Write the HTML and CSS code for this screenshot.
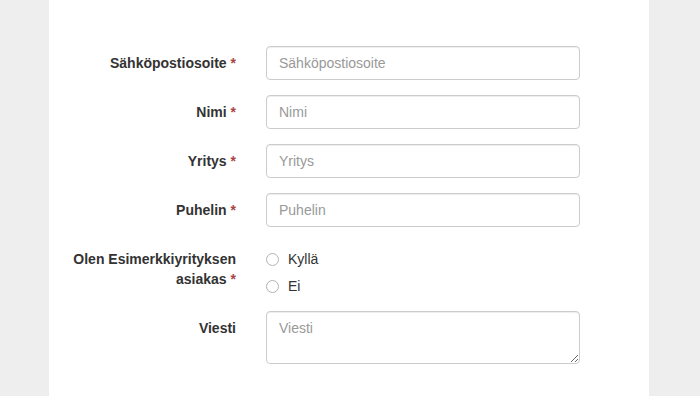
FILE: index.html
```html
<!DOCTYPE html>
<html lang="fi">
<head>
<meta charset="utf-8">
<link rel="stylesheet" href="styles.css">
</head>
<body>
<div class="page">
  <form class="panel">
    <div class="row">
      <label class="lbl" for="email">Sähköpostiosoite <span class="req">*</span></label>
      <input class="field" id="email" type="text" placeholder="Sähköpostiosoite">
    </div>
    <div class="row">
      <label class="lbl" for="name">Nimi <span class="req">*</span></label>
      <input class="field" id="name" type="text" placeholder="Nimi">
    </div>
    <div class="row">
      <label class="lbl" for="company">Yritys <span class="req">*</span></label>
      <input class="field" id="company" type="text" placeholder="Yritys">
    </div>
    <div class="row">
      <label class="lbl" for="phone">Puhelin <span class="req">*</span></label>
      <input class="field" id="phone" type="text" placeholder="Puhelin">
    </div>
    <div class="row">
      <div class="lbl">Olen Esimerkkiyrityksen asiakas <span class="req">*</span></div>
      <div class="radios">
        <label class="radio"><input type="radio" name="cust"><span>Kyllä</span></label>
        <label class="radio"><input type="radio" name="cust"><span>Ei</span></label>
      </div>
    </div>
    <div class="row">
      <label class="lbl" for="msg">Viesti</label>
      <textarea class="field area" id="msg" placeholder="Viesti"></textarea>
    </div>
  </form>
</div>
</body>
</html>
```
FILE: styles.css
```css
html, body {
  margin: 0;
  padding: 0;
  height: 100%;
  background: #eeeeee;
  font-family: "Liberation Sans", Arial, Helvetica, sans-serif;
  font-size: 14px;
  line-height: 20px;
  color: #333333;
}
.page {
  width: 600px;
  margin-left: 49px;
  min-height: 100%;
  background: #ffffff;
}
.panel {
  padding: 46px 0 0 15px;
  display: flex;
  flex-direction: column;
  gap: 15px;
}
.row {
  display: grid;
  grid-template-columns: 172px 314px;
  column-gap: 30px;
  align-items: start;
}
.lbl {
  font-weight: bold;
  text-align: right;
  padding-top: 7px;
}
.req {
  color: #a94442;
}
.field {
  box-sizing: border-box;
  width: 314px;
  height: 34px;
  margin: 0;
  padding: 6px 12px;
  border: 1px solid #cccccc;
  border-radius: 4px;
  font-family: inherit;
  font-size: 14px;
  line-height: 20px;
  color: #555555;
  background: #ffffff;
  box-shadow: inset 0 1px 1px rgba(0,0,0,0.075);
  outline: none;
}
.field::placeholder {
  color: #999999;
}
.area {
  height: 53px;
  resize: vertical;
  display: block;
}
.radios {
  display: flex;
  flex-direction: column;
}
.radio {
  display: flex;
  align-items: center;
  gap: 9px;
  padding-top: 7px;
  height: 20px;
  font-weight: normal;
}
.radio input {
  appearance: none;
  -webkit-appearance: none;
  width: 13px;
  height: 13px;
  margin: 1px 0 0 0;
  border: 1px solid #b3b3b3;
  border-radius: 50%;
  background: #ffffff;
  box-sizing: border-box;
}
```
